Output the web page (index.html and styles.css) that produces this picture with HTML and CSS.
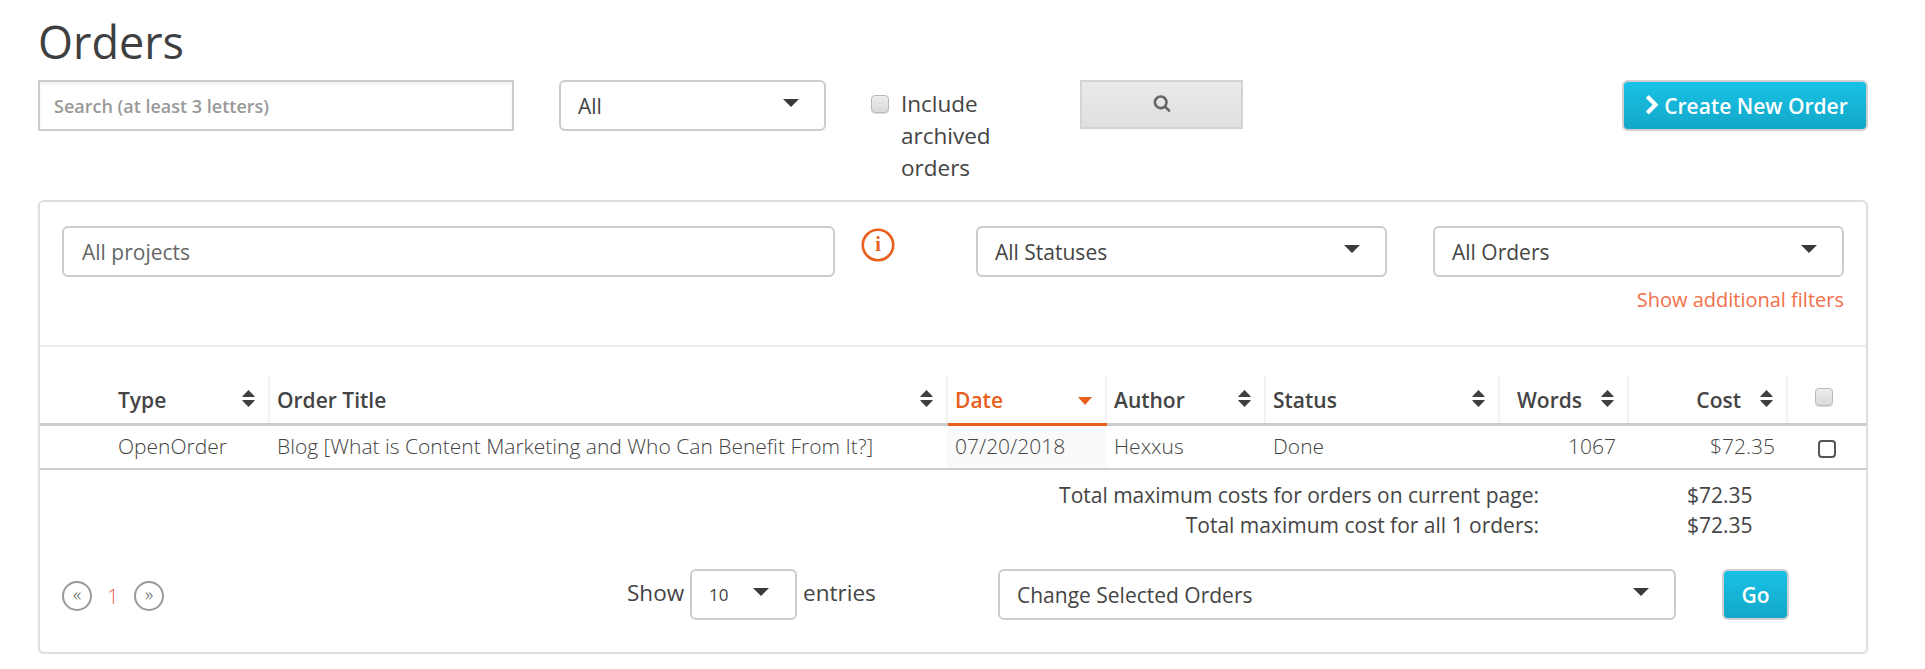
FILE: index.html
```html
<!DOCTYPE html>
<html lang="en">
<head>
<meta charset="utf-8">
<title>Orders</title>
<link rel="stylesheet" href="styles.css">
</head>
<body>
<svg class="defs" width="0" height="0" aria-hidden="true">
  <symbol id="sort" viewBox="0 0 13 17"><path d="M6.5 0 L12.6 6.2 Q13 7 12 7 H1 Q0 7 .4 6.2 Z"/><path d="M1 10 H12 Q13 10 12.6 10.8 L6.5 17 L.4 10.8 Q0 10 1 10 Z"/></symbol>
</svg>
<main class="page">
  <h1 class="title">Orders</h1>
  <div class="toolbar">
    <input class="search" type="text" placeholder="Search (at least 3 letters)">
    <div class="select select-all"><span>All</span><i class="caret"></i></div>
    <label class="archived"><span class="fake-check"></span><span class="archived-text">Include archived orders</span></label>
    <button class="search-btn" type="button" aria-label="Search"><svg viewBox="0 0 1792 1792" width="18" height="18"><path d="M1216 832q0-185-131.5-316.5t-316.5-131.5-316.5 131.5-131.5 316.5 131.5 316.5 316.5 131.5 316.5-131.5 131.5-316.5zm512 832q0 52-38 90t-90 38q-54 0-90-38l-343-342q-179 124-399 124-143 0-273.5-55.5t-225-150-150-225-55.5-273.5 55.5-273.5 150-225 225-150 273.5-55.5 273.5 55.5 225 150 150 225 55.5 273.5q0 220-124 399l343 343q37 37 37 90z"/></svg></button>
    <button class="cyan create" type="button"><svg viewBox="0 0 1792 1792" width="21" height="21"><path d="M1363 877l-742 742q-19 19-45 19t-45-19l-166-166q-19-19-19-45t19-45l531-531-531-531q-19-19-19-45t19-45l166-166q19-19 45-19t45 19l742 742q19 19 19 45t-19 45z"/></svg>Create New Order</button>
  </div>

  <section class="panel">
    <div class="filters">
      <div class="select projects"><span class="muted">All projects</span></div>
      <svg class="info" viewBox="0 0 34 34" width="34" height="34"><circle cx="17" cy="17" r="15.2"/><text x="17" y="23" text-anchor="middle">i</text></svg>
      <div class="filter-right">
        <div class="select statuses"><span>All Statuses</span><i class="caret"></i></div>
        <div class="orders-col">
          <div class="select"><span>All Orders</span><i class="caret"></i></div>
          <a class="more" href="#">Show additional filters</a>
        </div>
      </div>
    </div>

    <table class="grid">
      <colgroup>
        <col class="c-type"><col class="c-title"><col class="c-date"><col class="c-author"><col class="c-status"><col class="c-words"><col class="c-cost"><col class="c-check">
      </colgroup>
      <thead>
        <tr>
          <th class="first"><div class="th"><span>Type</span><svg class="sort"><use href="#sort"/></svg></div></th>
          <th><div class="th"><span>Order Title</span><svg class="sort"><use href="#sort"/></svg></div></th>
          <th class="active"><div class="th"><span>Date</span><i class="caret caret-orange"></i></div></th>
          <th><div class="th"><span>Author</span><svg class="sort"><use href="#sort"/></svg></div></th>
          <th><div class="th"><span>Status</span><svg class="sort"><use href="#sort"/></svg></div></th>
          <th><div class="th th-end"><span>Words</span><svg class="sort"><use href="#sort"/></svg></div></th>
          <th><div class="th th-end"><span>Cost</span><svg class="sort"><use href="#sort"/></svg></div></th>
          <th class="check-head"><span class="fake-check"></span></th>
        </tr>
      </thead>
      <tbody>
        <tr>
          <td class="first">OpenOrder</td>
          <td>Blog [What is Content Marketing and Who Can Benefit From It?]</td>
          <td class="date-cell">07/20/2018</td>
          <td>Hexxus</td>
          <td>Done</td>
          <td class="num">1067</td>
          <td class="num">$72.35</td>
          <td class="check-cell"><span class="row-check"></span></td>
        </tr>
      </tbody>
    </table>

    <div class="totals">
      <span class="t-label">Total maximum costs for orders on current page:</span><span class="t-value">$72.35</span>
      <span class="t-label">Total maximum cost for all 1 orders:</span><span class="t-value">$72.35</span>
    </div>

    <div class="foot">
      <nav class="pager">
        <a class="circle" href="#">«</a>
        <span class="page-num">1</span>
        <a class="circle" href="#">»</a>
      </nav>
      <div class="entries">
        <span>Show</span>
        <div class="select select-10"><span>10</span><i class="caret"></i></div>
        <span>entries</span>
      </div>
      <div class="select change"><span>Change Selected Orders</span><i class="caret"></i></div>
      <button class="cyan go" type="button">Go</button>
    </div>
  </section>
</main>
</body>
</html>
```
FILE: styles.css
```css
* { box-sizing: border-box; }
html, body { margin: 0; padding: 0; background: #fff; }
body { font-family: "Open Sans", sans-serif; font-size: 21px; color: #444; overflow: hidden; }
.defs { position: absolute; }
.page { padding-left: 38px; width: 1868px; }
.title { margin: 0; height: 80px; padding-top: 13px; font-size: 45px; line-height: 57px; font-weight: 400; color: #3f3f3f; }

.toolbar { display: flex; align-items: flex-start; height: 120px; }
.search { width: 476px; height: 51px; border: 2px solid #ccc; border-radius: 0; padding: 1px 14px 0; font: 600 18px "Open Sans", sans-serif; color: #444; outline: none; box-shadow: inset 0 2px 3px #f0f0f0; }
.search::placeholder { color: #999; opacity: 1; }

.select { display: flex; align-items: center; justify-content: space-between; height: 51px; background: #fff; border: 2px solid #ccc; border-radius: 6px; padding: 0 25px 0 17px; font-size: 21px; color: #444; }
.select-all { width: 267px; margin-left: 45px; }
.caret { display: block; width: 0; height: 0; border-left: 8px solid transparent; border-right: 8px solid transparent; border-top: 8px solid #3a3a3a; margin-top: -5px; }
.caret-orange { border-left-width: 7px; border-right-width: 7px; border-top-color: #e8601c; margin-top: 10px; }

.archived { display: flex; width: 209px; margin-left: 45px; padding-top: 8px; font-size: 22.5px; line-height: 32px; color: #444; }
.fake-check { display: block; flex: none; width: 18px; height: 18px; margin-top: 7px; background: linear-gradient(#eee, #d8d8d8); border: 1px solid #b9b9b9; border-radius: 4px; box-shadow: 0 1px 1px #ddd; }
.archived-text { display: block; width: 100px; margin-left: 12px; }
.search-btn { display: flex; align-items: center; justify-content: center; width: 163px; height: 49px; padding: 0 0 3px; border: 2px solid #d4d4d4; background: linear-gradient(#eaeaea, #e0e0e0); }
.search-btn svg { fill: #666; }

.cyan { border: 2px solid #d0d0d0; border-radius: 6px; background: linear-gradient(#17c2e6, #14a7c8); color: #fff; font-family: "Open Sans", sans-serif; font-weight: 600; font-size: 21px; }
.create { display: flex; align-items: center; justify-content: center; gap: 1px; width: 246px; height: 51px; margin-left: auto; padding: 0; }
.create svg { fill: #fff; }

.panel { height: 454px; border: 2px solid #dedede; border-radius: 6px; box-shadow: 0 1px 2px #eee; }
.filters { display: flex; align-items: flex-start; height: 145px; padding: 24px 22px 0; border-bottom: 2px solid #eee; }
.projects { width: 773px; padding-left: 18px; }
.muted { color: #666; }
.info { margin: 2px 0 0 26px; flex: none; }
.info circle { fill: none; stroke: #e8601c; stroke-width: 2.6; }
.info text { fill: #e8601c; font-family: "Liberation Serif", serif; font-size: 20px; font-weight: 700; }
.filter-right { display: flex; flex: 1; gap: 46px; margin-left: 81px; }
.statuses { flex: none; width: 411px; }
.orders-col { flex: 1; display: flex; flex-direction: column; }
.more { align-self: flex-end; margin-top: 9px; font-size: 20px; line-height: 28px; color: #f0704a; text-decoration: none; }

.grid { width: 1826px; margin-top: 29px; table-layout: fixed; border-collapse: collapse; }
.c-type { width: 229px; } .c-title { width: 678px; } .c-date { width: 159px; } .c-author { width: 159px; }
.c-status { width: 234px; } .c-words { width: 129px; } .c-cost { width: 159px; } .c-check { width: 79px; }
.grid th { height: 48px; padding: 11px 13px 0 7px; border-bottom: 3px solid #ccc; border-right: 2px solid #f2f2f2; font-size: 21px; font-weight: 600; text-align: left; color: #444; vertical-align: top; }
.grid th:last-child { border-right: 0; }
.grid th.first, .grid td.first { padding-left: 78px; }
.th { display: flex; justify-content: space-between; line-height: 27px; }
.th-end { justify-content: flex-end; gap: 19px; }
.sort { width: 13px; height: 17px; margin-top: 3px; fill: #3f3f3f; }
.grid th.active { color: #e8601c; border-bottom-color: #e8601c; }
.grid th.check-head { padding: 11px 0 0 27px; }
.check-head .fake-check { margin: 1px 0 0 0; }
.grid td { height: 45px; padding: 0 8px 2px; border-bottom: 2px solid #ccc; font-size: 21px; font-weight: 300; color: #444; white-space: nowrap; }
.grid td.date-cell { background: #fafafa; }
.grid td.num { text-align: right; padding-right: 12px; }
.grid td.check-cell { padding: 4px 0 0 31px; }
.row-check { display: block; width: 18px; height: 18px; border: 2px solid #555; border-radius: 4px; }

.totals { display: grid; grid-template-columns: 1499px auto; column-gap: 148px; padding-top: 10px; font-size: 21px; line-height: 30px; color: #444; }
.t-label { text-align: right; }

.foot { display: flex; align-items: flex-start; height: 84px; margin-top: 29px; padding-left: 22px; }
.pager { display: flex; align-items: center; width: 102px; height: 30px; margin-top: 12px; }
.circle { display: flex; align-items: center; justify-content: center; width: 30px; height: 30px; border: 2px solid #999; border-radius: 50%; font-size: 19px; font-weight: 300; line-height: 1; padding-bottom: 3px; color: #555; text-decoration: none; }
.page-num { width: 42px; text-align: center; font-size: 20px; font-weight: 300; color: #e85a5a; }
.entries { display: flex; align-items: flex-start; width: 251px; gap: 6px; margin-left: 463px; line-height: 48px; font-size: 22.5px; }
.select-10 { flex: none; width: 107px; margin: 0; padding: 0 26px 0 17px; font-size: 17px; line-height: normal; }
.change { width: 678px; margin-left: 120px; }
.go { width: 67px; height: 51px; margin-left: 46px; padding: 0; font-size: 21px; }
```
